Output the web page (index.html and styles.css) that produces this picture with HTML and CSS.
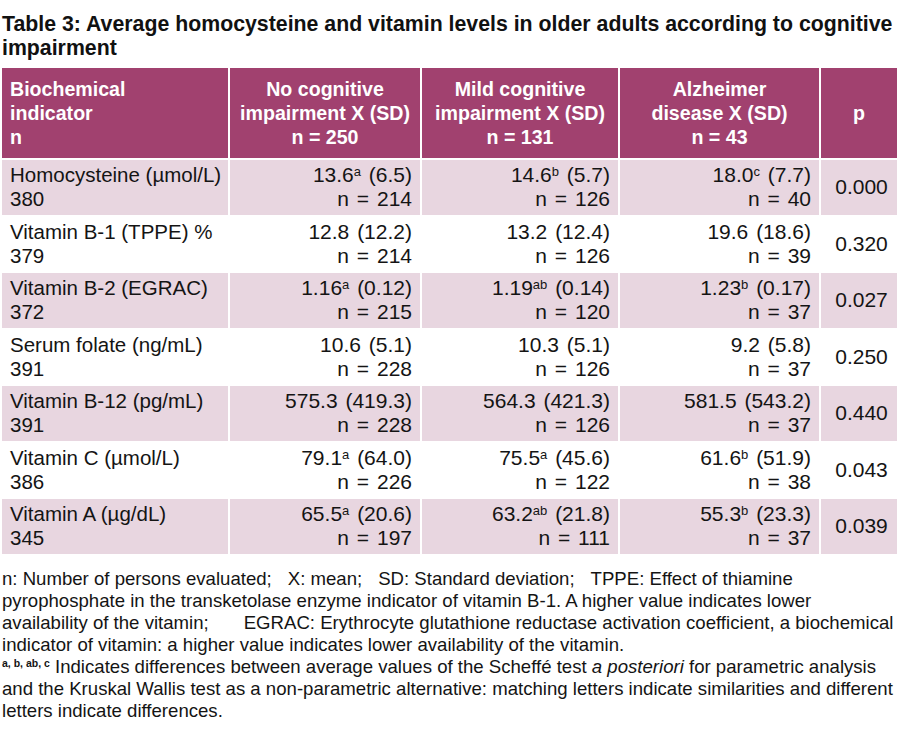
FILE: index.html
```html
<!DOCTYPE html>
<html lang="en">
<head>
<meta charset="utf-8">
<title>Table 3</title>
<link rel="stylesheet" href="styles.css">
</head>
<body>
<h1 class="title">Table 3: Average homocysteine and vitamin levels in older adults according to cognitive<br>impairment</h1>
<table class="data">
  <colgroup>
    <col class="c1"><col class="c2"><col class="c3"><col class="c4"><col class="c5">
  </colgroup>
  <thead>
    <tr>
      <th class="left">Biochemical<br>indicator<br>n</th>
      <th>No cognitive<br>impairment X (SD)<br>n = 250</th>
      <th>Mild cognitive<br>impairment X (SD)<br>n = 131</th>
      <th>Alzheimer<br>disease X (SD)<br>n = 43</th>
      <th>p</th>
    </tr>
  </thead>
  <tbody>
    <tr class="shade">
      <td class="name">Homocysteine (µmol/L)<br>380</td>
      <td class="num">13.6<sup>a</sup> (6.5)<br>n = 214</td>
      <td class="num">14.6<sup>b</sup> (5.7)<br>n = 126</td>
      <td class="num">18.0<sup>c</sup> (7.7)<br>n = 40</td>
      <td class="p">0.000</td>
    </tr>
    <tr>
      <td class="name">Vitamin B-1 (TPPE) %<br>379</td>
      <td class="num">12.8 (12.2)<br>n = 214</td>
      <td class="num">13.2 (12.4)<br>n = 126</td>
      <td class="num">19.6 (18.6)<br>n = 39</td>
      <td class="p">0.320</td>
    </tr>
    <tr class="shade">
      <td class="name">Vitamin B-2 (EGRAC)<br>372</td>
      <td class="num">1.16<sup>a</sup> (0.12)<br>n = 215</td>
      <td class="num">1.19<sup>ab</sup> (0.14)<br>n = 120</td>
      <td class="num">1.23<sup>b</sup> (0.17)<br>n = 37</td>
      <td class="p">0.027</td>
    </tr>
    <tr>
      <td class="name">Serum folate (ng/mL)<br>391</td>
      <td class="num">10.6 (5.1)<br>n = 228</td>
      <td class="num">10.3 (5.1)<br>n = 126</td>
      <td class="num">9.2 (5.8)<br>n = 37</td>
      <td class="p">0.250</td>
    </tr>
    <tr class="shade">
      <td class="name">Vitamin B-12 (pg/mL)<br>391</td>
      <td class="num">575.3 (419.3)<br>n = 228</td>
      <td class="num">564.3 (421.3)<br>n = 126</td>
      <td class="num">581.5 (543.2)<br>n = 37</td>
      <td class="p">0.440</td>
    </tr>
    <tr>
      <td class="name">Vitamin C (µmol/L)<br>386</td>
      <td class="num">79.1<sup>a</sup> (64.0)<br>n = 226</td>
      <td class="num">75.5<sup>a</sup> (45.6)<br>n = 122</td>
      <td class="num">61.6<sup>b</sup> (51.9)<br>n = 38</td>
      <td class="p">0.043</td>
    </tr>
    <tr class="shade">
      <td class="name">Vitamin A (µg/dL)<br>345</td>
      <td class="num">65.5<sup>a</sup> (20.6)<br>n = 197</td>
      <td class="num">63.2<sup>ab</sup> (21.8)<br>n = 111</td>
      <td class="num">55.3<sup>b</sup> (23.3)<br>n = 37</td>
      <td class="p">0.039</td>
    </tr>
  </tbody>
</table>
<div class="notes">
  <p class="note">n: Number of persons evaluated;<span class="gap"></span>X: mean;<span class="gap"></span>SD: Standard deviation;<span class="gap"></span>TPPE: Effect of thiamine<br>pyrophosphate in the transketolase enzyme indicator of vitamin B-1. A higher value indicates lower<br>availability of the vitamin;<span class="gap wide"></span>EGRAC: Erythrocyte glutathione reductase activation coefficient, a biochemical<br>indicator of vitamin: a higher value indicates lower availability of the vitamin.</p>
  <p class="note"><span class="keys">a, b, ab, c</span> Indicates differences between average values of the Scheffé test <em>a posteriori</em> for parametric analysis<br>and the Kruskal Wallis test as a non-parametric alternative: matching letters indicate similarities and different<br>letters indicate differences.</p>
</div>
</body>
</html>
```

FILE: styles.css
```css
html, body {
  margin: 0;
  padding: 0;
  background: #ffffff;
}

body {
  font-family: "Liberation Sans", Arial, sans-serif;
  color: #141414;
  width: 900px;
}

.title {
  margin: 12px 0 0 2px;
  font-size: 21.3px;
  line-height: 24px;
  font-weight: bold;
  color: #111111;
  white-space: nowrap;
}

.data {
  margin-top: 6px;
  border-collapse: separate;
  border-spacing: 2px;
  table-layout: fixed;
  width: 899px;
  font-size: 20.5px;
  line-height: 24px;
}

.c1 { width: 226px; }
.c2 { width: 190px; }
.c3 { width: 196px; }
.c4 { width: 199px; }
.c5 { width: 76px; }

.data th {
  background: #a1416f;
  color: #ffffff;
  font-size: 19.6px;
  font-weight: bold;
  text-align: center;
  vertical-align: middle;
  padding: 9px 2px;
  height: 72px;
  white-space: nowrap;
}

.data th.left {
  text-align: left;
  padding-left: 8px;
}

.data td {
  padding: 3px 8px 3.5px 8px;
  vertical-align: middle;
  white-space: nowrap;
}

.data tr.shade td {
  background: #e8d6e0;
}

.data td.name {
  text-align: left;
}

.data td.num {
  text-align: right;
  font-size: 21px;
  word-spacing: 2px;
}

.data td.p {
  text-align: center;
  font-size: 21px;
  padding: 3px 0 3.5px 5px;
}

.data sup {
  font-size: 13px;
  line-height: 0;
  vertical-align: 6px;
  word-spacing: 0;
}

.notes {
  margin: 12px 0 0 2px;
  font-size: 18.6px;
  line-height: 22px;
}

.note {
  margin: 0;
  white-space: nowrap;
}

.gap {
  display: inline-block;
  width: 16px;
}

.gap.wide {
  width: 35px;
}

.keys {
  font-size: 10.5px;
  font-weight: bold;
  vertical-align: 6px;
  line-height: 0;
}
```
